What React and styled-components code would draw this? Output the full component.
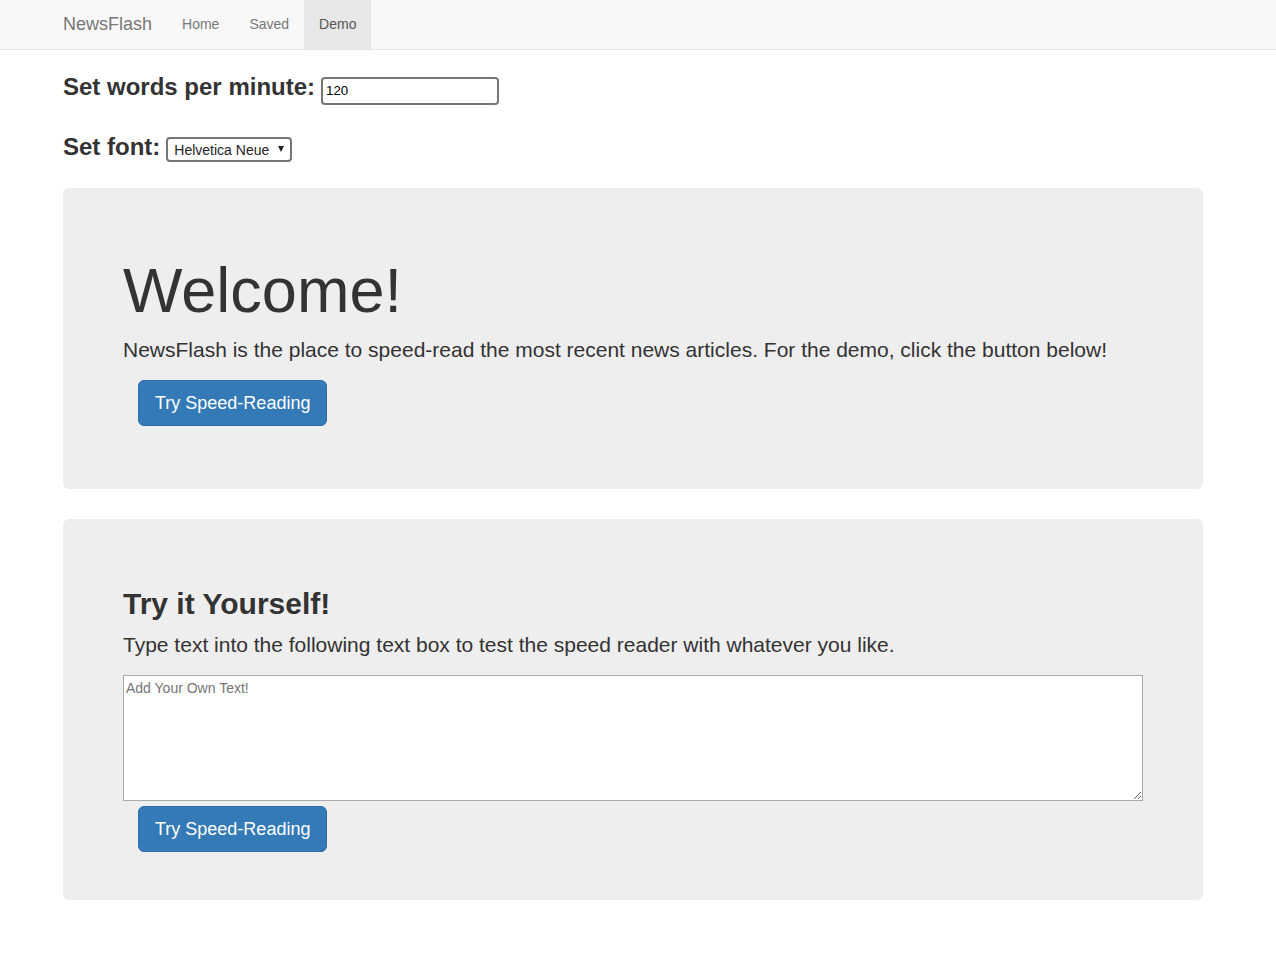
import styled, { createGlobalStyle } from 'styled-components';

const GlobalStyle = createGlobalStyle`
  * {
    box-sizing: border-box;
  }
  body {
    margin: 0;
    font-family: "Liberation Sans", Arial, sans-serif;
    font-size: 14px;
    line-height: 1.42857;
    color: #333;
    background: #fff;
  }
`;

const Navbar = styled.nav`
  height: 50px;
  background: #f8f8f8;
  border-bottom: 1px solid #e7e7e7;
`;
const NavInner = styled.div`
  display: flex;
  height: 49px;
  padding-left: 48px;
`;
const Brand = styled.a`
  padding: 14px 15px 15px;
  font-size: 18px;
  line-height: 20px;
  color: #777;
  text-decoration: none;
`;
const NavLink = styled.a`
  padding: 14px 15px 15px;
  line-height: 20px;
  font-size: 14px;
  text-decoration: none;
  color: ${(p) => (p.$active ? '#555' : '#777')};
  background: ${(p) => (p.$active ? '#e7e7e7' : 'transparent')};
`;

const Container = styled.main`
  width: 1140px;
  margin-left: 63px;
`;

const SettingRow = styled.h3`
  display: flex;
  align-items: baseline;
  gap: 6px;
  margin: ${(p) => p.$top}px 0 0;
  font-size: 24px;
  line-height: 26.4px;
  font-weight: bold;
`;
const WpmInput = styled.input`
  width: 178px;
  height: 28px;
  padding: 1px 3px;
  border: 2px solid #767676;
  border-radius: 4px;
  font-family: "Liberation Sans", Arial, sans-serif;
  font-size: 13.33px;
  color: #000;
  outline: none;
`;
const SelectWrap = styled.span`
  position: relative;
  display: inline-flex;
  &::after {
    content: '';
    position: absolute;
    right: 8px;
    top: 9px;
    border-left: 3.5px solid transparent;
    border-right: 3.5px solid transparent;
    border-top: 6px solid #222;
    pointer-events: none;
  }
`;
const FontSelect = styled.select`
  appearance: none;
  width: 126px;
  height: 25px;
  padding: 0 0 0 6px;
  border: 2px solid #767676;
  border-radius: 4px;
  background: #fff;
  font-family: "Liberation Sans", Arial, sans-serif;
  font-size: 14px;
  color: #222;
  outline: none;
`;

const Jumbotron = styled.section`
  margin-top: ${(p) => p.$top || 0}px;
  margin-bottom: 30px;
  padding: 48px 60px;
  background: #eee;
  border-radius: 6px;
`;
const Title = styled.h1`
  margin: 20px 0 10px;
  font-size: 63px;
  line-height: 1.1;
  font-weight: 500;
`;
const SubTitle = styled.h2`
  margin: 20px 0 10px;
  font-size: 30px;
  line-height: 1.1;
  font-weight: bold;
`;
const Lead = styled.p`
  margin: 0 0 15px;
  font-size: 21px;
  line-height: 30px;
`;
const ButtonLine = styled.p`
  margin: 0 0 ${(p) => (p.$flush ? 0 : 15)}px;
`;
const PrimaryButton = styled.button`
  margin-left: 15px;
  height: 46px;
  padding: 10px 16px;
  font-family: "Liberation Sans", Arial, sans-serif;
  font-size: 18px;
  line-height: 24px;
  color: #fff;
  background: #337ab7;
  border: 1px solid #2e6da4;
  border-radius: 6px;
  cursor: pointer;
`;
const TextBox = styled.textarea`
  display: block;
  width: 1020px;
  height: 126px;
  margin: 0 0 5px;
  padding: 2px;
  border: 1px solid #a9a9a9;
  font-family: "Liberation Sans", Arial, sans-serif;
  font-size: 14px;
  line-height: 20px;
  color: #000;
  resize: both;
  outline: none;
  &::placeholder {
    color: #757575;
  }
`;

const App = () => {
  return (
    <>
      <GlobalStyle />
      <Navbar>
        <NavInner>
          <Brand href="#">NewsFlash</Brand>
          <NavLink href="#">Home</NavLink>
          <NavLink href="#">Saved</NavLink>
          <NavLink href="#" $active>
            Demo
          </NavLink>
        </NavInner>
      </Navbar>
      <Container>
        <SettingRow $top={24}>
          Set words per minute:
          <WpmInput type="text" defaultValue="120" />
        </SettingRow>
        <SettingRow $top={29}>
          Set font:
          <SelectWrap>
            <FontSelect defaultValue="Helvetica Neue">
              <option>Helvetica Neue</option>
              <option>Arial</option>
              <option>Times New Roman</option>
            </FontSelect>
          </SelectWrap>
        </SettingRow>
        <Jumbotron $top={26}>
          <Title>Welcome!</Title>
          <Lead>
            NewsFlash is the place to speed-read the most recent news articles.
            For the demo, click the button below!
          </Lead>
          <ButtonLine>
            <PrimaryButton>Try Speed-Reading</PrimaryButton>
          </ButtonLine>
        </Jumbotron>
        <Jumbotron>
          <SubTitle>Try it Yourself!</SubTitle>
          <Lead>
            Type text into the following text box to test the speed reader with
            whatever you like.
          </Lead>
          <TextBox placeholder="Add Your Own Text!" />
          <ButtonLine $flush>
            <PrimaryButton>Try Speed-Reading</PrimaryButton>
          </ButtonLine>
        </Jumbotron>
      </Container>
    </>
  );
};

export default App;
